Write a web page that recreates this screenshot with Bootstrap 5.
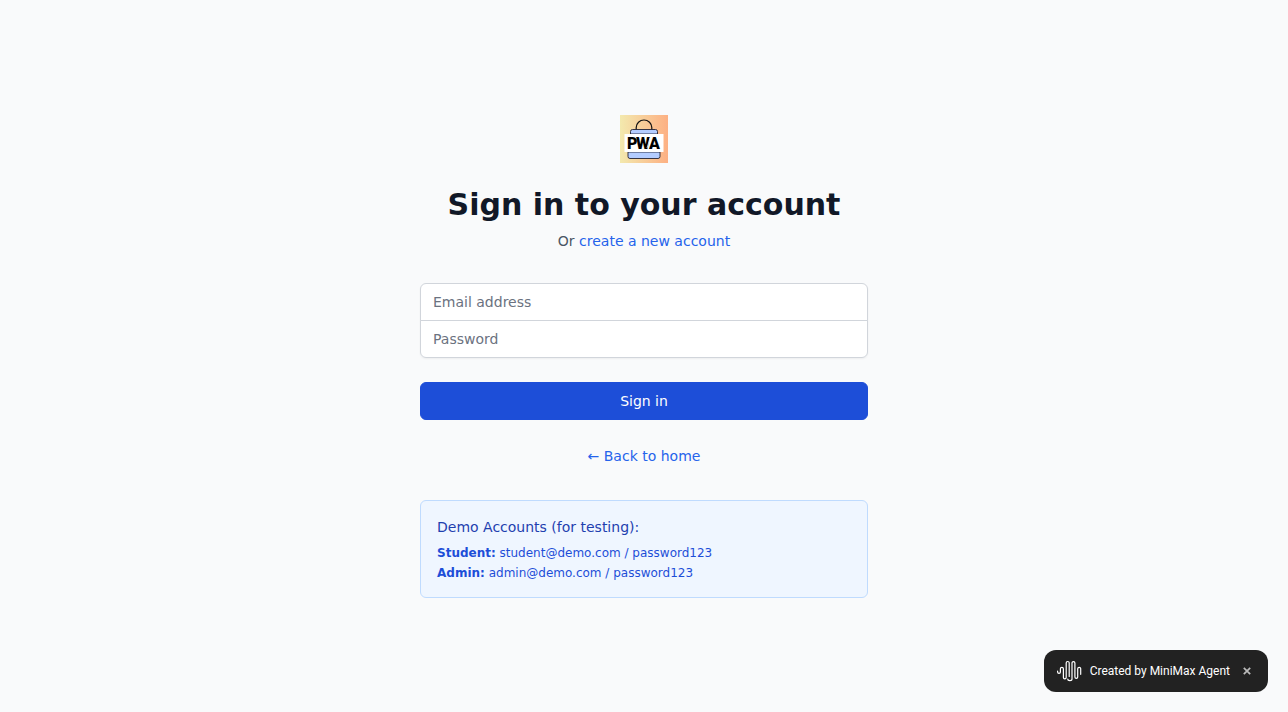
<!DOCTYPE html>
<html lang="en">
<head>
<meta charset="utf-8">
<meta name="viewport" content="width=device-width, initial-scale=1">
<title>Sign in</title>
<link href="https://cdn.jsdelivr.net/npm/bootstrap@5.3.0/dist/css/bootstrap.min.css" rel="stylesheet">
<style>
  body { background: #f9fafb; color: #4b5563; font: 14px/20px "DejaVu Sans", sans-serif; }
  a { color: #2563eb; text-decoration: none; }
  a:hover { color: #1d4ed8; }
  .auth-panel { max-width: 448px; }
  .auth-title { font-size: 30px; line-height: 36px; font-weight: 700; color: #111827; }
  .stacked-fields { border-radius: 6px; box-shadow: 0 1px 2px rgba(0, 0, 0, .05); }
  .stacked-fields .form-control { border-color: #d1d5db; padding: 8px 12px; font-size: 14px; line-height: 20px; height: 38px; border-radius: 6px; }
  .stacked-fields .form-control::placeholder { color: #6b7280; }
  .stacked-fields .form-control:first-of-type { border-bottom-left-radius: 0; border-bottom-right-radius: 0; }
  .stacked-fields .form-control:last-of-type { border-top-left-radius: 0; border-top-right-radius: 0; margin-top: -1px; }
  .btn-signin { --bs-btn-bg: #1d4ed8; --bs-btn-border-color: #1d4ed8; --bs-btn-color: #fff; --bs-btn-hover-bg: #1e40af; --bs-btn-hover-color: #fff; --bs-btn-padding-y: 8px; --bs-btn-font-size: 14px; --bs-btn-line-height: 20px; --bs-btn-border-radius: 6px; }
  .back-row { line-height: 24px; }
  .demo-box { margin-top: 32px; background: #eff6ff; border: 1px solid #bfdbfe; border-radius: 6px; color: #1d4ed8; font-size: 12px; line-height: 16px; }
  .demo-title { font-size: 14px; line-height: 20px; font-weight: 400; color: #1e40af; }
  .demo-box strong { font-weight: 700; }
  .maker-badge { right: 20px; bottom: 20px; height: 42px; padding: 0 16px 0 12px; border-radius: 12px; background: #222; color: #fff; font: 12px/16px Roboto, sans-serif; }
  .maker-close { color: #bbb; width: 10px; height: 16px; margin-left: 12px; }
</style>
</head>
<body>
<main class="min-vh-100 d-flex align-items-center justify-content-center">
  <div class="auth-panel w-100">
    <div class="text-center">
      <svg class="d-block mx-auto" width="48" height="48" viewBox="0 0 48 48" role="img" aria-label="App logo">
        <defs><linearGradient id="sunset"><stop offset="0" stop-color="#f3e9ae"/><stop offset="1" stop-color="#fdb083"/></linearGradient></defs>
        <rect width="48" height="48" fill="url(#sunset)"/>
        <path d="M16.200 15v-2.500a7.800 7.500 0 0 1 15.600 0V15" fill="none" stroke="#111" stroke-width="1.200"/>
        <path d="M10.500 19V16.500q0-2 2-2h23q2 0 2 2V19zM8 37h32v4.500q0 2-2 2h-28q-2 0-2-2z" fill="#b3ccff" stroke="#223" stroke-width=".9"/>
        <rect x="4.500" y="19" width="39" height="18" fill="#fff"/>
        <text x="7 16 29" y="34" font-family="Roboto, sans-serif" font-size="16" font-weight="900" fill="#000">PWA</text>
        <path d="M30 23l-3 10" stroke="#fff" stroke-width=".7"/>
      </svg>
      <h1 class="auth-title mt-4 mb-2">Sign in to your account</h1>
      <p class="mb-0">Or <a href="#register">create a new account</a></p>
    </div>
    <form class="demo-form pt-4 mt-2">
      <div class="stacked-fields mb-4">
        <input type="email" class="form-control" placeholder="Email address" aria-label="Email address" autocomplete="email">
        <input type="password" class="form-control" placeholder="Password" aria-label="Password" autocomplete="current-password">
      </div>
      <button type="submit" class="btn btn-signin w-100 d-block">Sign in</button>
      <div class="back-row text-center mt-4"><a href="#home">← Back to home</a></div>
    </form>
    <section class="demo-box p-3">
      <h2 class="demo-title mb-2">Demo Accounts (for testing):</h2>
      <p class="mb-1"><strong>Student:</strong> student@demo.com / password123</p>
      <p class="mb-0"><strong>Admin:</strong> admin@demo.com / password123</p>
    </section>
  </div>
</main>
<aside class="maker-badge position-fixed d-flex align-items-center">
  <svg class="me-2" width="26" height="24" viewBox="0 0 26 24" fill="none" stroke="#fff" stroke-width="1.200" stroke-linecap="round" aria-hidden="true">
    <path d="M1.600 12.200v.8a1.400 1.400 0 0 0 2.800 0V9.800a1.500 1.500 0 0 1 3 0v8.700a1.400 1.400 0 0 0 2.800 0V4a1.500 1.500 0 0 1 3 0v13.500M11.800 20a1.900 1.500 0 0 0 4.200 0V4a1.400 1.400 0 0 1 2.900 0v14a1.400 1.400 0 0 0 2.800 0V9.800a1.500 1.500 0 0 1 3 0v5.500"/>
  </svg>
  <span>Created by MiniMax Agent</span>
  <button type="button" class="maker-close btn p-0 border-0 d-flex align-items-center justify-content-center" aria-label="Close">
    <svg width="8" height="8" viewBox="0 0 8 8" stroke="currentColor" stroke-width="1.700"><path d="M.8 .8l6.400 6.400M7.200 .8L.8 7.200"/></svg>
  </button>
</aside>
<script src="https://cdn.jsdelivr.net/npm/bootstrap@5.3.0/dist/js/bootstrap.bundle.min.js"></script>
</body>
</html>
